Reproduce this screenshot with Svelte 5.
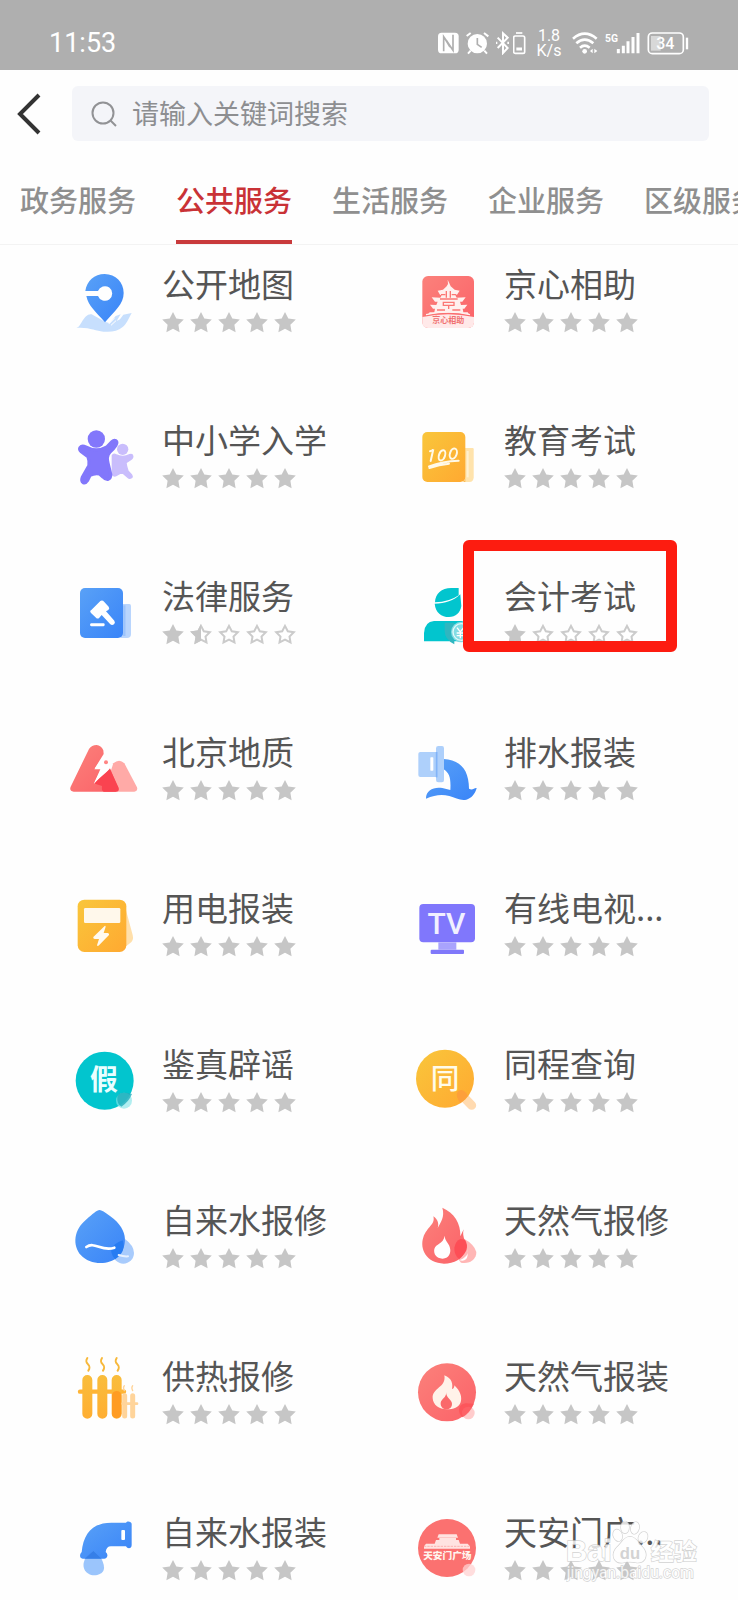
<script>
  const tabs = ['政务服务', '公共服务', '生活服务', '企业服务', '区级服务'];
  let active = $state('公共服务');
  let query = $state('');

  const services = [
    { name: '公开地图', icon: pin, box: '54 30 216 216', score: 5 },
    { name: '京心相助', icon: pagoda, box: '30 30 216 216', score: 5 },
    { name: '中小学入学', icon: kids, box: '54 498 216 216', score: 5 },
    { name: '教育考试', icon: exam, box: '30 498 216 216', score: 5 },
    { name: '法律服务', icon: law, box: '54 21 216 216', score: 1.5 },
    { name: '会计考试', icon: accountant, box: '30 141 216 216', score: 1, marked: true },
    { name: '北京地质', icon: geology, box: '54 489 216 216', score: 5 },
    { name: '排水报装', icon: drain, box: '30 609 216 216', score: 5 },
    { name: '用电报装', icon: meter, box: '54 27 216 216', score: 5 },
    { name: '有线电视...', icon: tv, box: '30 27 216 216', score: 5 },
    { name: '鉴真辟谣', icon: rumour, box: '54 495 216 216', score: 5 },
    { name: '同程查询', icon: trip, box: '30 495 216 216', score: 5 },
    { name: '自来水报修', icon: water, box: '54 33 216 216', score: 5 },
    { name: '天然气报修', icon: flame, box: '30 33 216 216', score: 5 },
    { name: '供热报修', icon: heating, box: '54 501 216 216', score: 5 },
    { name: '天然气报装', icon: gas, box: '30 501 216 216', score: 5 },
    { name: '自来水报装', icon: pipe, box: '54 69 216 216', score: 5 },
    { name: '天安门广...', icon: square, box: '30 69 216 216', score: 5 }
  ];
  const starPath = 'M11 .9 14.3 7.5 21.8 8.6 16.4 13.8 17.6 21.2 11 17.7 4.4 21.2 5.6 13.8.2 8.6 7.7 7.5Z';
  const halfPath = 'M11 .9V17.7L4.4 21.2 5.6 13.8.2 8.6 7.7 7.5Z';
  const hollowPath = 'M11 2.9 13.8 8.3 19.8 9.2 15.5 13.5 16.5 19.5 11 16.7 5.5 19.5 6.5 13.5 2.2 9.2 8.2 8.3Z';
</script>

{#snippet pin()}
  <path fill="#c7dffd" d="M79 219c9-3 12-12 18-21 8-12 17-23 28-20l40 22 14 5 18-22 15-5-12 20 10-5 10-14 25-5c-9 16-15 33-28 43-13 12-34 15-57 13-23-1-41-14-81-11Z" />
  <path fill="url(#blue)" d="M164 57c33 0 57 25 57 57 0 33-27 54-56 88-29-34-49-48-56-79h35a22 22 0 1 0 0-15h-38c4-29 27-51 58-51Z" />
  <path d="M176 207l17-17M183 211l15-14" stroke="#fff" stroke-width="3" />
{/snippet}

{#snippet pagoda()}
  <rect x="67" y="63" width="155" height="156" rx="17" fill="url(#red)" />
  <path fill="#ffe9e9" d="M67 186q77-16 155 0v16q0 17-17 17H84q-17 0-17-17Z" />
  <path fill="#fff0ee" d="M143 74l6 13 3 7 12 10 15 3-8 12-5 2 4 7 27-1-10 13h-7l3 10 19-1-9 12h-5l2 11h13l4 6q-55-11-123 0l5-6h14l2-11h-6l-9-12 19 1 4-10h-8l-10-13 26 1 4-7-5-2-7-12 16-3 11-10 4-7Z" />
  <path fill="none" stroke="#fb7774" stroke-width="4" d="M139 108v20M151 108v20M123 119h13M155 119h14M120 132h53M130 142h32v9h-32ZM146 151v11M111 165h24M157 165h24" />
  <path d="M78 179q66-15 132 0" fill="none" stroke="#fff3f1" stroke-width="4" />
  <text x="145" y="205" text-anchor="middle" font-size="24" font-weight="700" fill="#f0706f">京心相助</text>
{/snippet}

{#snippet kids()}
  <g fill="#c9bdfc">
    <circle cx="218" cy="583" r="17" />
    <path stroke="#c9bdfc" stroke-width="4" stroke-linejoin="round" d="M187 601q4-6 10-2 22 10 42 0 8-2 9 3 2 6-5 11l-15 10q1 12 6 25l11 12q4 6-2 9-5 3-10-2l-14-12h-9l-12 7q-6 3-11-3V610Z" />
  </g>
  <g fill="#8277fb">
    <circle cx="139" cy="552" r="26" />
    <path stroke="#8277fb" stroke-width="10" stroke-linejoin="round" d="M90 578q6-8 17-2 33 18 64 0l15-16q6-6 11-3 6 4 1 13-7 11-19 22-11 12-5 33l8 33q1 11-8 15-8 1-15-7l-10-9q-14-4-29 4l-8 16q-5 8-12 6-7-5-3-16l20-35q2-15-3-27l-20-15q-7-6-4-12Z" />
  </g>
{/snippet}

{#snippet exam()}
  <path fill="#ffe3ac" d="M195 579h23q3 0 3 4v84q0 14-13 14h-20Z" />
  <path d="M203 588v79" stroke="#fff1d2" stroke-width="6" />
  <rect x="67" y="531" width="129" height="150" rx="15" fill="url(#gold)" />
  <path fill="#f9bb54" d="M190 681q7-5 6-16v16Z" />
  <g fill="none" stroke="#fff9e8" stroke-width="6" stroke-linecap="round">
    <path d="M90 589q8-2 10-6l-8 35" />
    <ellipse cx="126" cy="601" rx="9" ry="16" transform="rotate(19 126 601)" />
    <ellipse cx="160" cy="596" rx="10" ry="16" transform="rotate(19 160 596)" />
    <path d="M87 634q40-15 89-17M88 639q30-11 59-13" />
  </g>
{/snippet}

{#snippet law()}
  <path fill="#b9d5fd" d="M217 102h21q5 0 5 6v84q0 12-12 12h-20Z" />
  <path d="M223 106v92" stroke="#9cc3fb" stroke-width="7" />
  <rect x="90" y="54" width="129" height="150" rx="15" fill="url(#blue)" />
  <path fill="#fff" d="M151 93q6-4 12 3l13 14q4 6-1 10l-7 4 25 28q4 6-1 11-6 4-11 0l-26-28-7 8q-5 5-10 0l-15-14q-5-6 1-9ZM124 160h37q4 1 3 5-1 4-4 4h-36q-4-1-4-5 1-4 4-4Z" />
{/snippet}

{#snippet accountant()}
  <path fill="#02c5ce" d="M176 174h-22c-30 0-48 17-49 43q43-1 71-21ZM181 193c-20 19-45 28-77 28 3 27 20 40 43 40 20 0 34-13 37-33Z" />
  <path fill="#02c5ce" d="M72 334v-25q2-34 30-36h86v61Z" />
  <path fill="#30b6c0" d="M134 278h29v65q-29-15-29-40Z" />
  <circle cx="184" cy="306" r="31" fill="#82dce4" />
  <circle cx="184" cy="306" r="25" fill="none" stroke="#e5fafa" stroke-width="4" />
  <path d="M171 293l10 13 10-13M181 305v20M170 309h21M170 317h21" stroke="#fff" stroke-width="4" fill="none" />
{/snippet}

{#snippet geology()}
  <path fill="#ffaaa7" d="M190 580q18-15 33 0l38 72q3 11-8 13h-91Z" />
  <path fill="url(#red)" d="M117 537q8-12 23-12 13 1 20 16l1 11-26 42 20 1-23 45 17-7 31-38 24 58q4 9-8 12H71q-14-2-9-15Z" />
  <path fill="#fa4350" d="M180 597l26 56q3 12-9 12h-36q-7-2-5-17l-25 -8Z" />
  <path fill="#fff" d="M161 557l-28 41h18l-20 45 48-54-15-1 9-18Z" />
  <circle cx="168" cy="577" r="6" fill="#ff8584" />
{/snippet}

{#snippet drain()}
  <path fill="url(#blue)" d="M131 687c47 3 76 29 76 89 11 7 16-4 23-2-4 17-16 31-31 35-18 4-32-6-51-11-26-6-44-2-70 8-1-24 23-37 49-32l24 6c2-35-2-50-20-62Z" />
  <path fill="#aed0fb" d="M55 671q0-5 6-5h47v75H61q-6 0-6-6ZM108 655q0-7 7-7h11q6 0 6 7v95q0 7-6 7h-11q-7 0-7-7Z" />
  <path d="M110 666v76" stroke="#82b4f8" stroke-width="5" />
  <rect x="91" y="682" width="9" height="40" rx="2" fill="#fff" />
{/snippet}

{#snippet meter()}
  <path fill="#ffdfaa" d="M226 83l22 82q5 18-11 27-15 11-23 17Z" />
  <rect x="83" y="59" width="146" height="157" rx="20" fill="url(#gold)" />
  <rect x="102" y="84" width="109" height="45" rx="4" fill="#fff8eb" />
  <path fill="#fffaf0" d="M164 138l-34 33q-2 5 4 6h13l-6 19q2 4 6 0l30-31q2-5-4-6h-12l6-19q-1-4-3-2Z" />
{/snippet}

{#snippet tv()}
  <rect x="58" y="72" width="167" height="115" rx="12" fill="#8077fc" />
  <path fill="#a9a3fd" d="M115 187h54v22h-54Z" />
  <rect x="92" y="209" width="100" height="13" rx="3" fill="#8078fa" />
  <text x="139" y="162" text-anchor="middle" font-size="90" font-weight="500" fill="#f1f0ff" class="latin">TV</text>
{/snippet}

{#snippet rumour()}
  <circle cx="164" cy="602" r="87" fill="#02c5ce" />
  <circle cx="222" cy="662" r="24" fill="#87e5e8" opacity=".65" />
  <path fill="#22aebc" opacity=".8" d="M202 650q4-13 20-12 14 0 24 4-10 24-32 38-14-10-12-30Z" />
  <text x="162" y="631" text-anchor="middle" font-size="84" font-weight="700" fill="#e9ffff">假</text>
{/snippet}

{#snippet trip()}
  <path d="M184 644l31 32" stroke="#ffdab0" stroke-width="27" stroke-linecap="round" />
  <circle cx="135" cy="596" r="87" fill="url(#gold)" />
  <path fill="#fd9f3b" d="M174 634q12-10 24 4l6 9q-12 15-24 22l-6-12q-7-12 0-23Z" />
  <text x="135" y="628" text-anchor="middle" font-size="86" font-weight="500" fill="#fffbea">同</text>
{/snippet}

{#snippet water()}
  <path fill="#a8cbfc" d="M225 147q27 20 27 42a32 32 0 0 1-64 0q0-25 37-42Z" />
  <path fill="url(#blue)" d="M149 60q8 0 31 18c62 44 50 96 23 123-29 27-85 23-110-5-27-31-21-78 15-107 21-17 32-29 41-29Z" />
  <path fill="#277cf2" d="M218 151q12 34-23 57-31-37 23-57Z" />
  <path d="M109 171c25-18 47 16 84 2" fill="none" stroke="#fff" stroke-width="8" stroke-linecap="round" />
  <path d="M206 195q15 5 28 4" fill="none" stroke="#e7f1ff" stroke-width="6" stroke-linecap="round" />
{/snippet}

{#snippet flame()}
  <path fill="#ffb6b5" d="M192 146q31 17 37 40c1 22-22 38-46 32l-25-32Z" />
  <path fill="url(#red)" d="M127 53c35 15 56 47 54 86l10-21c-7 23 11 40 6 60-8 31-35 43-65 43-52-1-74-43-62-79 11-32 37-38 30-63 15 10 17 24 13 35 9-17 22-33 14-61Z" />
  <path fill="#fd4e56" d="M163 173q4-21 18-26l14 2q18 30-18 58-15-13-14-34Z" />
  <path fill="#fff" d="M134 137c1 19 16 22 17 43 0 17-10 26-24 26-18-1-27-14-24-29 4-17 27-14 31-40ZM202 176q4 16-7 25-5 6-17 10 22 6 25-15Z" />
{/snippet}

{#snippet heating()}
  <g fill="none" stroke="#f7b83a" stroke-width="6" stroke-linecap="round">
    <path d="M112 504c-13 20 17 17 3 38M156 504c-13 20 17 17 3 38M200 504c-13 20 17 17 3 38" />
    <path d="M90 605h132" stroke-width="13" stroke="#ffb435" />
  </g>
  <path d="M112 570v101M157 570v101M200 570v101" stroke="url(#goldLine)" stroke-width="30" stroke-linecap="round" />
  <path d="M200 617v53" stroke="#ff9c23" stroke-width="28" stroke-linecap="round" />
  <g stroke="#ffd49a" stroke-linecap="round" fill="none">
    <path d="M224 617v61M248 617v61" stroke-width="15" />
    <path d="M218 641h43" stroke-width="8" />
    <path d="M223 587q-5 6 0 15M248 587q-5 6 0 15" stroke-width="4" />
  </g>
{/snippet}

{#snippet gas()}
  <circle cx="141" cy="607" r="87" fill="url(#red)" />
  <circle cx="205" cy="669" r="19" fill="#ffb7b7" opacity=".7" />
  <path fill="#fd5157" opacity=".8" d="M177 658q2-16 20-18l25 1q-11 26-34 41-11-7-11-24Z" />
  <path fill="#fff2e9" d="M133 556c23 9 26 26 23 41 8-1 7-11 7-11 18 17 24 35 19 51-5 16-22 21-41 21-25 0-41-13-43-33-2-32 42-32 35-69Z" />
  <path fill="#fa696a" d="M139 607c-2 17 17 22 17 34 0 12-8 16-16 17-13 0-19-10-18-20 2-11 17-15 17-31Z" />
{/snippet}

{#snippet pipe()}
  <path fill="url(#blue)" d="M228 98c4-7 18-3 17 5v62c0 12-13 12-17 4h-45q-14 0-16 17 8 7 4 15-2 5-8 5H98c-11-1-9-15-3-19 5-57 33-89 89-89Z" />
  <rect x="214" y="120" width="11" height="30" rx="3" fill="#fff" />
  <path fill="#79b1fb" d="M130 182l25 26q19 39-13 47c-31 7-51-21-37-47Z" opacity=".75" />
  <path fill="#367fe8" d="M130 182l25 24h-51Z" />
{/snippet}

{#snippet square()}
  <circle cx="141" cy="174" r="87" fill="#fb7170" />
  <circle cx="207" cy="240" r="19" fill="#ffd1d1" opacity=".75" />
  <path fill="#ffe3e1" d="M116 133h54l4 10h-62ZM118 144h50v6h-50ZM108 150h68l4 11h23l7 8v7H72v-7l6-8h26Z" />
  <path d="M72 169h138" stroke="#fb9a97" stroke-width="2" stroke-dasharray="7 3" />
  <text x="142" y="208" text-anchor="middle" font-size="29" font-weight="900" fill="#fff4ed">天安门广场</text>
{/snippet}

<svg class="defs" aria-hidden="true">
  <defs>
    <linearGradient id="blue" x1="0" y1="0" x2="1" y2="1"><stop stop-color="#59a1f7" /><stop offset="1" stop-color="#3984f8" /></linearGradient>
    <linearGradient id="red" x1="0" y1="0" x2="1" y2="1"><stop stop-color="#fb817b" /><stop offset="1" stop-color="#fb6268" /></linearGradient>
    <linearGradient id="gold" x1="0" y1="0" x2="1" y2="1"><stop stop-color="#f9c63b" /><stop offset="1" stop-color="#ffa931" /></linearGradient>
    <linearGradient id="goldLine" gradientUnits="userSpaceOnUse" x1="0" y1="555" x2="0" y2="687"><stop stop-color="#f9bd3c" /><stop offset="1" stop-color="#ffae32" /></linearGradient>
  </defs>
</svg>

<div class="page">
  <div class="status">
    <time>11:53</time>
    <div class="signals">
      <svg width="21" height="24" viewBox="204 89 63 72"><rect x="204" y="94" width="62" height="62" rx="11" fill="#fff" /><path d="M221 150v-44l28 41v-47M221 106l19 31M249 147l-19-29" stroke="#afafaf" stroke-width="5" fill="none" /></svg>
      <svg width="23" height="24" viewBox="288 89 69 72"><circle cx="322" cy="127" r="29" fill="#fff" /><path d="M290 104l12-9M342 95l13 10M302 148l-8 9M343 148l8 9" stroke="#fff" stroke-width="6" /><path d="M322 110v19l13 9" stroke="#afafaf" stroke-width="5" fill="none" /></svg>
      <div class="pair">
        <svg width="13" height="24" viewBox="378 89 39 72"><path d="M383 109l30 31-14 15V96l14 13-30 31M379 121v7M415 121v7" fill="none" stroke="#fff" stroke-width="6" /></svg>
        <svg width="13" height="24" viewBox="429 89 39 72"><path d="M438 95h19" stroke="#fff" stroke-width="5" /><rect x="431" y="104" width="33" height="52" rx="5" fill="none" stroke="#fff" stroke-width="5" /><path d="M439 143h17" stroke="#fff" stroke-width="9" /></svg>
      </div>
      <div class="speed"><span>1.8</span><span>K/s</span></div>
      <svg width="26" height="24" viewBox="615 89 78 72"><path d="M618 112q35-30 71 0M628 126q25-22 51 0M639 139q14-12 29 0" fill="none" stroke="#fff" stroke-width="8" /><circle cx="653" cy="150" r="7" fill="#fff" /><path d="M677 142v14l-8-7ZM682 142v14l9-7Z" fill="#fff" /></svg>
      <svg width="35" height="24" viewBox="708 89 105 72"><text x="708" y="122" font-size="31" font-weight="700" class="latin" fill="#fff">5G</text><path d="M748 143v13M763 133v23M777 120v36M792 107v49M807 95v61" stroke="#fff" stroke-width="9" /></svg>
      <svg width="42" height="24" viewBox="834 89 126 72"><rect x="838" y="95" width="105" height="62" rx="12" fill="none" stroke="#fff" stroke-width="5" /><path d="M846 104h29v44h-29Z" fill="#d8d8d8" /><path d="M954 109v35" stroke="#fff" stroke-width="7" /><text x="889" y="143" text-anchor="middle" font-size="48" font-weight="500" fill="#fff" class="latin">34</text></svg>
    </div>
  </div>

  <header>
    <div class="search-row">
      <button class="back" aria-label="返回">
        <svg width="24" height="42" viewBox="0 0 24 42"><path d="M22 2 3 21 22 40" fill="none" stroke="#333" stroke-width="4" /></svg>
      </button>
      <label class="search">
        <svg width="26" height="26" viewBox="0 0 26 26"><circle cx="12" cy="12" r="10.5" fill="none" stroke="#919295" stroke-width="2" /><path d="M19 19l6 6" stroke="#919295" stroke-width="2" /></svg>
        <input type="search" aria-label="搜索" placeholder="请输入关键词搜索" bind:value={query} />
      </label>
    </div>
    <nav>
      {#each tabs as tab}
        <button class="tab" class:active={tab === active} onclick={() => (active = tab)}>{tab}</button>
      {/each}
    </nav>
  </header>

  <main>
    {#each services as item}
      <a class="service" href="#service">
        <svg class="icon" viewBox={item.box} aria-hidden="true">{@render item.icon()}</svg>
        <div class="info">
          <span class="name">{item.name}</span>
          <span class="stars">
            {#each [1, 2, 3, 4, 5] as n}
              <svg width="22" height="22" viewBox="0 0 22 22" aria-hidden="true">
                {#if item.score >= n}
                  <path d={starPath} fill="#c6c6c6" />
                {:else}
                  <path d={hollowPath} fill="#fff" stroke="#cbcbcb" stroke-width="2" />
                  {#if item.score > n - 1}<path d={halfPath} fill="#c6c6c6" />{/if}
                {/if}
              </svg>
            {/each}
          </span>
        </div>
        {#if item.marked}<span class="mark"></span>{/if}
      </a>
    {/each}
  </main>

  <svg class="watermark" width="134" height="66" viewBox="498 90 402 198" aria-hidden="true">
    <g fill="#fff" stroke="#c9c9c9" stroke-width="4" paint-order="stroke">
      <ellipse cx="653" cy="136" rx="13" ry="18" transform="rotate(-20 653 136)" />
      <ellipse cx="675" cy="112" rx="12" ry="18" />
      <ellipse cx="705" cy="114" rx="12" ry="18" transform="rotate(15 705 114)" />
      <ellipse cx="729" cy="142" rx="13" ry="17" transform="rotate(25 729 142)" />
      <path d="M690 140c18 0 24 18 37 31 19 20 11 48-15 47q-23-5-44 0c-29 3-36-27-17-46 14-13 21-32 39-32Z" />
      <text x="498" y="213" font-size="88" font-weight="700" class="arial">Bai</text>
      <text x="752" y="209" font-size="69" font-weight="700">经验</text>
      <text x="500" y="265" font-size="47" class="latin">jingyan.baidu.com</text>
    </g>
    <text x="690" y="208" text-anchor="middle" font-size="50" font-weight="700" fill="#c9c9c9" class="arial">du</text>
  </svg>
</div>

<style>
  :global(body) {
    margin: 0;
    background: #fefefe;
  }
  .page {
    position: relative;
    overflow: hidden;
    min-height: 100vh;
    font-family: 'Noto Sans CJK SC', 'Noto Sans', sans-serif;
    color: #555;
  }
  button {
    border: 0;
    padding: 0;
    background: none;
    font: inherit;
    color: inherit;
    cursor: pointer;
  }
  svg {
    display: block;
    flex: none;
  }
  .defs {
    position: absolute;
    width: 0;
    height: 0;
  }
  .latin {
    font-family: Roboto, sans-serif;
  }
  .arial {
    font-family: 'Liberation Sans', sans-serif;
  }
  .status {
    display: flex;
    align-items: center;
    justify-content: space-between;
    box-sizing: border-box;
    height: 70px;
    padding: 15px 49px 0;
    background: #afafaf;
    color: #fff;
    font-family: Roboto, sans-serif;
  }
  time {
    font-size: 27px;
    line-height: 32px;
  }
  .signals {
    display: flex;
    align-items: center;
    gap: 7px;
  }
  .pair {
    display: flex;
    gap: 4px;
  }
  .speed {
    display: flex;
    flex-direction: column;
    align-items: center;
    width: 24px;
    margin: 0 4px;
    font-size: 16px;
    line-height: 15px;
  }
  header {
    border-bottom: 1px solid #f3f3f3;
  }
  .search-row {
    display: flex;
    align-items: center;
    gap: 31px;
    padding: 16px 29px 0 17px;
  }
  .search {
    display: flex;
    flex: 1;
    align-items: center;
    gap: 15px;
    height: 55px;
    padding: 0 19px;
    border-radius: 6px;
    background: #f4f5f9;
  }
  input {
    flex: 1;
    min-width: 0;
    height: 38px;
    border: 0;
    padding: 0 0 2px;
    outline: 0;
    background: none;
    font: inherit;
    font-size: 27px;
    color: #555;
  }
  input::placeholder {
    color: #8d8e91;
    opacity: 1;
  }
  nav {
    display: flex;
    gap: 40px;
    overflow: hidden;
    padding: 20px 0 0 20px;
  }
  .tab {
    flex: none;
    height: 83px;
    border-bottom: 4px solid transparent;
    padding-bottom: 2px;
    font-size: 29px;
    font-weight: 500;
    line-height: 77px;
    color: #8f8f8f;
    white-space: nowrap;
  }
  .active {
    border-color: #c93a3c;
    color: #c93236;
  }
  main {
    display: grid;
    grid-template-columns: 1fr 1fr;
    row-gap: 84px;
    padding: 20px 0 15px 68px;
    margin-right: -14px;
  }
  .service {
    position: relative;
    display: flex;
    gap: 22px;
    color: inherit;
    text-decoration: none;
  }
  .icon {
    width: 72px;
    height: 72px;
    overflow: visible;
  }
  .info {
    display: flex;
    flex-direction: column;
    gap: 6px;
  }
  .name {
    height: 40px;
    font-size: 33px;
    line-height: 36px;
    white-space: nowrap;
  }
  .stars {
    display: flex;
    gap: 6px;
  }
  .mark {
    position: absolute;
    top: -37px;
    left: 53px;
    box-sizing: border-box;
    width: 214px;
    height: 112px;
    border: 11px solid #fd1c10;
    border-radius: 6px;
  }
  .watermark {
    position: absolute;
    right: 38px;
    bottom: 14px;
    opacity: 0.8;
  }
</style>
